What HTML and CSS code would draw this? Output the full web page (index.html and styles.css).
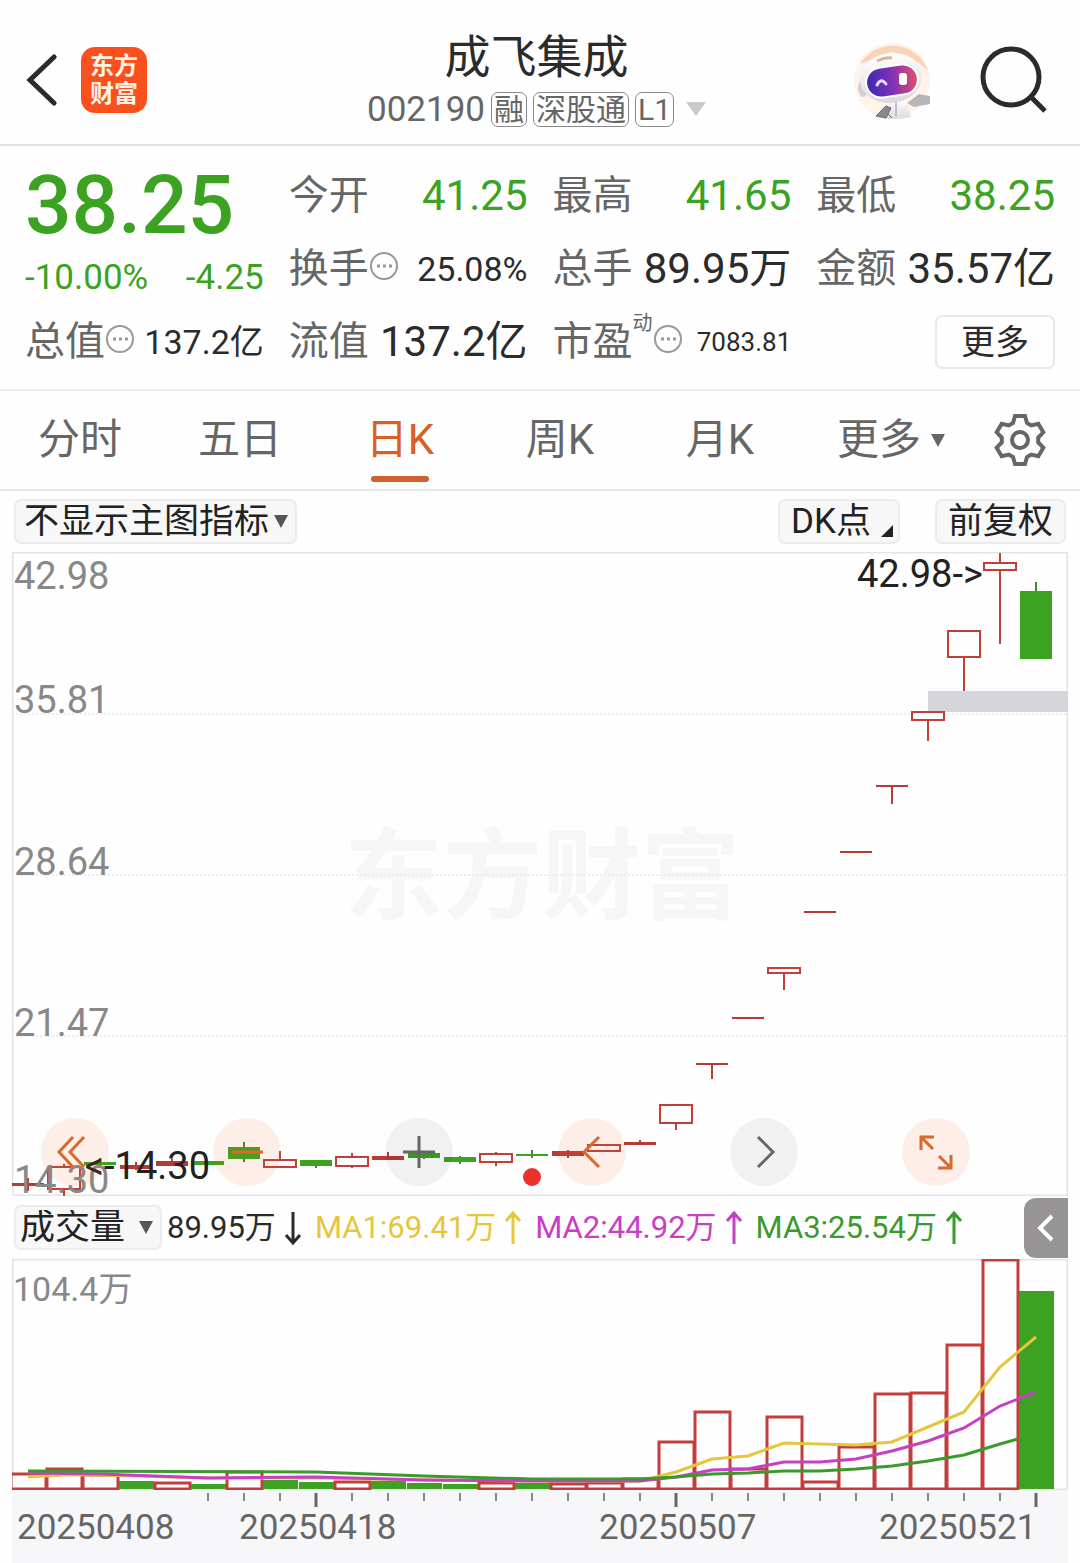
FILE: index.html
```
<!DOCTYPE html>
<html lang="zh-CN">
<head>
    <meta charset="UTF-8">
    <meta name="viewport" content="width=device-width, initial-scale=1.0">
    <title>成飞集成 002190</title>
    <link rel="stylesheet" href="styles.css">
</head>
<body>
    <header class="header">
        <div class="header-left">
            <button class="icon-button" aria-label="返回">
                <svg width="32" height="54" viewBox="0 0 32 54"><path d="M29 4L5 27l24 23" fill="none" stroke="#2b2b2b" stroke-width="5" stroke-linecap="round"/></svg>
            </button>
            <a href="#" class="logo"><span>东方</span><span>财富</span></a>
        </div>
        <div class="stock">
            <h1>成飞集成</h1>
            <div class="stock-code">
                <span>002190</span>
                <span class="tag">融</span>
                <span class="tag">深股通</span>
                <span class="tag">L1</span>
                <svg class="code-arrow" width="20" height="14" viewBox="0 0 20 14"><path d="M0 0h20L10 14z" fill="#c9c9c9"/></svg>
            </div>
        </div>
        <div class="header-right">
            <button class="icon-button" aria-label="智能助手">
                <svg width="80" height="80" viewBox="0 0 80 80">
                    <defs>
                        <linearGradient id="visor" x1="0" y1="0" x2="1" y2="0">
                            <stop offset="0" stop-color="#3a2bb0"/>
                            <stop offset="0.5" stop-color="#8030b8"/>
                            <stop offset="1" stop-color="#e0506a"/>
                        </linearGradient>
                        <linearGradient id="shell" x1="0" y1="0" x2="0" y2="1">
                            <stop offset="0" stop-color="#ffffff"/>
                            <stop offset="1" stop-color="#dcd9dc"/>
                        </linearGradient>
                    </defs>
                    <circle cx="40" cy="41" r="38" fill="#fff3ea"/>
                    <path d="M8 24A38 38 0 0 1 76 30L60 18 40 12z" fill="#fbd3b8"/>
                    <path d="M30 60h24l5 17q-18 4-32 0z" fill="url(#shell)"/>
                    <path d="M55 63l12-9 11 2v8l-16 3z" fill="#b9b5b9"/>
                    <path d="M34 66l-10 10 10 2 5-10zM36 74l4 4" fill="#8d888c" stroke="#6d686c"/>
                    <path d="M44 62v14" stroke="#c2bec2" stroke-width="2"/>
                    <ellipse cx="11" cy="48" rx="5" ry="9" fill="#d3cfd4"/>
                    <ellipse cx="39" cy="38" rx="31" ry="25" fill="url(#shell)" transform="rotate(-8 39 38)"/>
                    <path d="M25 21q8-4 15-3" stroke="#d8b79c" stroke-width="3" fill="none"/>
                    <rect x="13" y="25" width="54" height="32" rx="16" fill="#ffffff" transform="rotate(-8 40 41)"/>
                    <rect x="15" y="27" width="50" height="28" rx="14" fill="url(#visor)" transform="rotate(-8 40 41)"/>
                    <path d="M25 45q4-8 9-1" stroke="#e7d9ff" stroke-width="3" fill="none" stroke-linecap="round"/>
                    <rect x="47" y="33" width="8" height="12" rx="3" fill="#fff"/>
                </svg>
            </button>
            <button class="icon-button" aria-label="搜索">
                <svg width="68" height="68" viewBox="0 0 68 68" fill="none" stroke="#2b2b2b" stroke-width="5"><circle cx="31" cy="31" r="28"/><path d="M51 51l14 14"/></svg>
            </button>
        </div>
    </header>

    <section class="quote">
        <div class="price-box">
            <div class="price">38.25</div>
            <div class="change"><span>-10.00%</span><span>-4.25</span></div>
        </div>
        <div class="cell"><span class="name">今开</span><span class="value down">41.25</span></div>
        <div class="cell"><span class="name">最高</span><span class="value down">41.65</span></div>
        <div class="cell"><span class="name">最低</span><span class="value down">38.25</span></div>
        <div class="cell">
            <span class="name">换手</span>
            <svg class="info" viewBox="0 0 30 30"><circle cx="15" cy="15" r="13"/><path d="M8 15h3M14 15h3M20 15h3"/></svg>
            <span class="value medium">25.08%</span>
        </div>
        <div class="cell"><span class="name">总手</span><span class="value">89.95万</span></div>
        <div class="cell"><span class="name">金额</span><span class="value">35.57亿</span></div>
        <div class="cell">
            <span class="name">总值</span>
            <svg class="info" viewBox="0 0 30 30"><circle cx="15" cy="15" r="13"/><path d="M8 15h3M14 15h3M20 15h3"/></svg>
            <span class="value medium">137.2亿</span>
        </div>
        <div class="cell"><span class="name">流值</span><span class="value">137.2亿</span></div>
        <div class="cell">
            <span class="name">市盈</span><span class="sup">动</span>
            <svg class="info" viewBox="0 0 30 30"><circle cx="15" cy="15" r="13"/><path d="M8 15h3M14 15h3M20 15h3"/></svg>
            <span class="value small">7083.81</span>
        </div>
        <div class="cell"><button class="more-button">更多</button></div>
    </section>

    <nav class="tabs">
        <button>分时</button>
        <button>五日</button>
        <button class="active">日K</button>
        <button>周K</button>
        <button>月K</button>
        <button class="tab-more">更多<svg width="14" height="13" viewBox="0 0 14 13"><path d="M0 0h14L7 13z" fill="#666"/></svg></button>
        <button aria-label="设置">
            <svg width="54" height="54" viewBox="-27 -27 54 54" fill="none" stroke="#666" stroke-width="4">
                <path d="M-7-17L-5-24H5L7-17 11.2-14.6 18.3-16.3 23.3-7.7 18.2-2.4V2.4L23.3 7.7 18.3 16.3 11.2 14.6 7 17 5 24H-5L-7 17-11.2 14.6-18.3 16.3-23.3 7.7-18.2 2.4V-2.4L-23.3-7.7-18.3-16.3-11.2-14.6z"/>
                <circle r="8"/>
            </svg>
        </button>
    </nav>

    <div class="toolbar">
        <div class="select-box">
            <select aria-label="主图指标"><option>不显示主图指标</option></select>
            <svg width="14" height="13" viewBox="0 0 14 13"><path d="M0 0h14L7 13z" fill="#555"/></svg>
        </div>
        <button class="chip dk">DK点<svg width="12" height="12" viewBox="0 0 12 12"><path d="M12 0v12H0z" fill="#222"/></svg></button>
        <button class="chip">前复权</button>
    </div>

    <main class="charts">
        <div class="kline">
            <svg viewBox="12 552 1056 644">
                <text class="watermark" x="542" y="911">东方财富</text>
                <path class="grid-line" d="M12 714H1068M12 875H1068M12 1036H1068"/>
                <path class="frame" d="M12.5 552.5H1067.5V1195.5H12.5z"/>
                <rect x="928" y="691" width="140" height="21" fill="#d5d6dc"/>
                <g id="candles"></g>
                <g class="scale">
                    <text x="14" y="589">42.98</text>
                    <text x="14" y="713">35.81</text>
                    <text x="14" y="875">28.64</text>
                    <text x="14" y="1036">21.47</text>
                    <text x="14" y="1193">14.30</text>
                </g>
                <text class="mark" x="857" y="587">42.98-&gt;</text>
                <text class="mark" x="210" y="1179" text-anchor="end">&lt;-14.30</text>
                <circle cx="532" cy="1177" r="9" fill="#ee2f2c"/>
            </svg>
            <div class="controls">
                <button class="warm" aria-label="最左"><svg viewBox="0 0 68 68"><path d="M32 19L18 34l14 15M43 19L29 34l14 15"/></svg></button>
                <button class="warm" aria-label="缩小"><svg viewBox="0 0 68 68"><path d="M18 34h32"/></svg></button>
                <button aria-label="放大"><svg viewBox="0 0 68 68"><path d="M18 34h32M34 18v32"/></svg></button>
                <button class="warm" aria-label="左移"><svg viewBox="0 0 68 68"><path d="M41 19L26 34l15 15"/></svg></button>
                <button aria-label="右移"><svg viewBox="0 0 68 68"><path d="M28 19l15 15-15 15"/></svg></button>
                <button class="warm" aria-label="全屏"><svg viewBox="0 0 68 68"><path d="M19 32V19h13M19 19l12 12M36 50h13V37M49 50L37 38"/></svg></button>
            </div>
        </div>

        <div class="indicator">
            <div class="select-box">
                <select aria-label="副图指标"><option>成交量</option></select>
                <svg width="14" height="13" viewBox="0 0 14 13"><path d="M0 0h14L7 13z" fill="#555"/></svg>
            </div>
            <div class="ma">89.95万<svg viewBox="0 0 18 36"><path d="M9 2v31M2 25l7 8 7-8"/></svg></div>
            <div class="ma ma1">MA1:69.41万<svg viewBox="0 0 18 36"><path d="M9 34V3M2 11l7-8 7 8"/></svg></div>
            <div class="ma ma2">MA2:44.92万<svg viewBox="0 0 18 36"><path d="M9 34V3M2 11l7-8 7 8"/></svg></div>
            <div class="ma ma3">MA3:25.54万<svg viewBox="0 0 18 36"><path d="M9 34V3M2 11l7-8 7 8"/></svg></div>
            <button class="drawer" aria-label="展开"><svg width="20" height="30" viewBox="0 0 20 30"><path d="M16 3L4 15l12 12" fill="none" stroke="#fff" stroke-width="4"/></svg></button>
        </div>

        <svg viewBox="12 1259 1056 231">
            <path class="frame" d="M12.5 1259.5H1067.5V1489.5H12.5z"/>
            <g id="volumes"></g>
            <polyline class="line ma1" points="28,1477 64,1475 100,1475 208,1478 316,1478 424,1480 532,1481 640,1481 676,1472 712,1459 748,1456 784,1443 820,1444 856,1445 892,1442 928,1427 964,1412 1000,1367 1036,1337"/>
            <polyline class="line ma2" points="28,1473 100,1474 208,1478 316,1477 424,1480 532,1481 640,1481 676,1477 712,1470 748,1469 784,1462 820,1462 856,1459 892,1451 928,1441 964,1428 1000,1406 1036,1392"/>
            <polyline class="line ma3" points="28,1471 316,1472 424,1476 532,1479 640,1479 676,1477 712,1474 748,1473 784,1471 820,1471 856,1469 892,1466 928,1461 964,1455 1000,1444 1018,1439"/>
            <text class="volume-max" x="13" y="1301">104.4万</text>
        </svg>

        <svg class="axis" viewBox="12 1490 1056 73">
            <g id="ticks"></g>
            <text x="17" y="1539">20250408</text>
            <text x="239" y="1539">20250418</text>
            <text x="599" y="1539">20250507</text>
            <text x="879" y="1539">20250521</text>
        </svg>
    </main>

    <script>
        const STEP = 36;
        const START = 28;

        // type, body top, body bottom, high, low
        const candles = [
            ['flat', 1183, 1186, 1178, 1191],
            ['up', 1167, 1189, 1164, 1196],
            ['down', 1162, 1165, 1158, 1166],
            ['flat', 1165, 1169, 1162, 1170],
            ['flat', 1161, 1166, 1159, 1166],
            ['down', 1161, 1165, 1161, 1165],
            ['down', 1147, 1159, 1142, 1162],
            ['up', 1160, 1167, 1151, 1167],
            ['down', 1160, 1166, 1160, 1168],
            ['up', 1157, 1166, 1153, 1168],
            ['flat', 1156, 1160, 1152, 1160],
            ['down', 1153, 1158, 1153, 1159],
            ['down', 1157, 1162, 1156, 1164],
            ['up', 1154, 1162, 1152, 1166],
            ['down', 1154, 1156, 1150, 1158],
            ['flat', 1151, 1156, 1150, 1158],
            ['up', 1145, 1151, 1145, 1151],
            ['flat', 1142, 1145, 1140, 1145],
            ['up', 1105, 1123, 1105, 1130],
            ['flat', 1063, 1065, 1063, 1079],
            ['flat', 1017, 1019, 1017, 1019],
            ['up', 968, 973, 968, 990],
            ['flat', 911, 913, 911, 913],
            ['flat', 851, 853, 851, 853],
            ['flat', 785, 787, 785, 804],
            ['up', 712, 720, 712, 741],
            ['up', 631, 657, 631, 691],
            ['up', 563, 570, 553, 644],
            ['down', 591, 659, 582, 659]
        ];

        // type, bar top
        const volumes = [
            ['up', 1474], ['up', 1469], ['up', 1475], ['down', 1481], ['up', 1483],
            ['down', 1484], ['up', 1472], ['down', 1480], ['down', 1482], ['up', 1482],
            ['down', 1481], ['down', 1483], ['down', 1484], ['up', 1483], ['down', 1483],
            ['up', 1484], ['up', 1483], ['up', 1479], ['up', 1442], ['up', 1412],
            ['up', 1469], ['up', 1417], ['up', 1482], ['up', 1447], ['up', 1394],
            ['up', 1393], ['up', 1345], ['up', 1260], ['down', 1291]
        ];

        document.getElementById('candles').innerHTML = candles.map(([type, top, bottom, high, low], i) => {
            const x = START + i * STEP;
            return `<g class="${type}">
                <path d="M${x} ${high}V${top}M${x} ${bottom}V${low}"/>
                <rect x="${x - 16}" y="${top}" width="32" height="${bottom - top}"/>
            </g>`;
        }).join('');

        document.getElementById('volumes').innerHTML = volumes.map(([type, top], i) => {
            const x = START + i * STEP - 18;
            return `<g class="${type}"><rect x="${x + 1}" y="${top}" width="35" height="${1489 - top}"/></g>`;
        }).join('');

        let ticks = '';
        for (let i = 5; i < candles.length; i++) {
            const x = START + i * STEP;
            const major = [8, 18, 28].includes(i);
            ticks += `<path class="${major ? 'major' : ''}" d="M${x} 1493V${major ? 1507 : 1501}"/>`;
        }
        document.getElementById('ticks').innerHTML = ticks;
    </script>
</body>
</html>
```
FILE: styles.css
```
* {
    box-sizing: border-box;
    margin: 0;
    padding: 0;
}

body {
    font-family: Roboto, 'Noto Sans CJK SC', sans-serif;
    background-color: #fefefe;
    color: #2b2b2b;
    line-height: 1;
}

button,
select {
    font-family: inherit;
    color: inherit;
    background: none;
    border: none;
    line-height: 1;
    cursor: pointer;
}

svg {
    display: block;
}

.header {
    display: grid;
    grid-template-columns: 1fr auto 1fr;
    align-items: center;
    height: 146px;
    padding: 16px 32px 0 25px;
    border-bottom: 2px solid #e2e2e2;
}

.header-left,
.header-right {
    display: flex;
    align-items: center;
    gap: 24px;
}

.header-right {
    justify-content: flex-end;
    gap: 48px;
}

.logo {
    display: flex;
    flex-direction: column;
    align-items: center;
    justify-content: center;
    gap: 4px;
    width: 66px;
    height: 66px;
    border-radius: 14px;
    background-color: #f9501e;
    color: #fff3e4;
    font-size: 24px;
    font-weight: bold;
    text-decoration: none;
}

.stock {
    text-align: center;
}

.stock h1 {
    font-size: 46px;
    font-weight: normal;
    margin-bottom: 12px;
}

.stock-code {
    display: flex;
    align-items: center;
    gap: 6px;
    font-size: 35px;
    color: #666;
}

.tag {
    font-size: 30px;
    line-height: 33px;
    padding: 0 2px;
    border: 1px solid #888;
    border-radius: 7px;
}

.code-arrow {
    margin-left: 6px;
}

.quote {
    display: grid;
    grid-template-columns: repeat(4, 1fr);
    grid-auto-rows: 73px;
    column-gap: 25px;
    padding: 13px 25px 11px;
    border-bottom: 2px solid #ebebeb;
}

.price-box {
    grid-row: span 2;
    color: #3ba222;
}

.price {
    font-size: 82px;
    font-weight: 500;
    line-height: 92px;
}

.change {
    display: flex;
    justify-content: space-between;
    font-size: 35px;
    line-height: 54px;
}

.cell {
    display: flex;
    align-items: center;
}

.name {
    font-size: 40px;
    color: #666;
}

.value {
    margin-left: auto;
    font-size: 42px;
}

.medium {
    font-size: 34px;
}

.small {
    font-size: 26px;
}

.value.down {
    color: #3ba222;
}

.sup {
    align-self: flex-start;
    margin-top: 8px;
    font-size: 20px;
    color: #666;
}

.info {
    width: 30px;
    height: 30px;
    margin-bottom: 6px;
    fill: none;
    stroke: #999;
    stroke-width: 2;
}

.info path {
    stroke-width: 3;
}

.more-button {
    width: 120px;
    height: 54px;
    margin-left: auto;
    border: 2px solid #e8e8e8;
    border-radius: 7px;
    font-size: 34px;
}

.tabs {
    display: grid;
    grid-template-columns: repeat(6, 4fr) 3fr;
    height: 100px;
    border-bottom: 2px solid #e8e8e8;
    color: #666;
}

.tabs button {
    display: flex;
    align-items: center;
    justify-content: center;
    font-size: 42px;
}

.tabs .active {
    position: relative;
    color: #d95f22;
}

.tabs .active::after {
    content: '';
    position: absolute;
    bottom: 7px;
    left: 50%;
    width: 58px;
    height: 6px;
    margin-left: -29px;
    border-radius: 3px;
    background-color: #d2602f;
}

.tabs .tab-more {
    gap: 10px;
    padding-left: 22px;
}

.toolbar {
    display: flex;
    align-items: center;
    height: 61px;
    padding: 0 14px;
}

.select-box,
.chip {
    position: relative;
    height: 45px;
    border: 2px solid #ececec;
    border-radius: 7px;
    background-color: #f7f7f8;
    color: #222;
    font-size: 35px;
}

.select-box select {
    height: 41px;
    padding: 0 25px 0 8px;
    appearance: none;
    font-size: 35px;
}

.select-box svg {
    position: absolute;
    right: 7px;
    top: 14px;
    pointer-events: none;
}

.chip {
    padding: 0 11px;
}

.dk {
    display: flex;
    align-items: center;
    gap: 10px;
    margin-left: auto;
    margin-right: 35px;
    padding-right: 5px;
}

.dk svg {
    align-self: flex-end;
    margin-bottom: 5px;
}

.charts {
    margin: 0 12px;
}

.charts > svg,
.kline > svg {
    width: 100%;
}

.kline {
    position: relative;
}

.frame {
    fill: none;
    stroke: #e4e4e4;
    stroke-width: 2;
}

.grid-line {
    stroke: #ececec;
    stroke-width: 2;
    stroke-dasharray: 2 2;
}

.watermark {
    font-size: 99px;
    font-weight: bold;
    fill: #f6f6f6;
    text-anchor: middle;
}

.scale {
    font-size: 38px;
    fill: #888;
}

.volume-max {
    font-size: 34px;
    fill: #888;
}

.mark {
    font-size: 38px;
    fill: #222;
}

.up {
    fill: #fefefe;
    stroke: #c33e3a;
    stroke-width: 2;
}

.flat path,
.down path {
    stroke: #b83a36;
    stroke-width: 2;
}

.flat {
    fill: #b83a36;
}

.down {
    fill: #3ba222;
}

.down path {
    stroke: #3b8f28;
}

#volumes .up {
    stroke-width: 3;
}

.controls {
    position: absolute;
    left: 0;
    right: 0;
    bottom: 10px;
    display: flex;
    justify-content: space-between;
    padding: 0 98px 0 29px;
}

.controls button {
    width: 68px;
    height: 68px;
    border-radius: 50%;
    background-color: rgba(0, 0, 0, 0.05);
}

.controls .warm {
    background-color: rgba(250, 100, 40, 0.1);
}

.controls svg {
    fill: none;
    stroke: #666;
    stroke-width: 3;
}

.controls .warm svg {
    stroke: #d9692c;
}

.indicator {
    display: flex;
    align-items: center;
    gap: 13px;
    height: 63px;
    padding-left: 2px;
}

.indicator .select-box {
    margin-right: -8px;
}

.indicator select {
    padding: 0 34px 0 4px;
}

.ma {
    display: flex;
    align-items: center;
    gap: 8px;
    font-size: 31px;
    white-space: nowrap;
}

.ma svg {
    width: 18px;
    height: 36px;
    fill: none;
    stroke: currentColor;
    stroke-width: 3;
}

.ma1 {
    color: #e6c63c;
}

.ma2 {
    color: #c83fc4;
}

.ma3 {
    color: #3a9a2c;
}

.line {
    fill: none;
    stroke: currentColor;
    stroke-width: 3;
}

.drawer {
    display: flex;
    align-items: center;
    justify-content: center;
    width: 44px;
    height: 60px;
    margin-left: auto;
    border-radius: 12px 0 0 12px;
    background-color: #969495;
}

.axis {
    background-color: #f7f7fa;
    font-size: 35px;
    fill: #666;
}

.axis path {
    stroke: #888;
    stroke-width: 2;
}

.axis .major {
    stroke: #666;
    stroke-width: 3;
}
```
